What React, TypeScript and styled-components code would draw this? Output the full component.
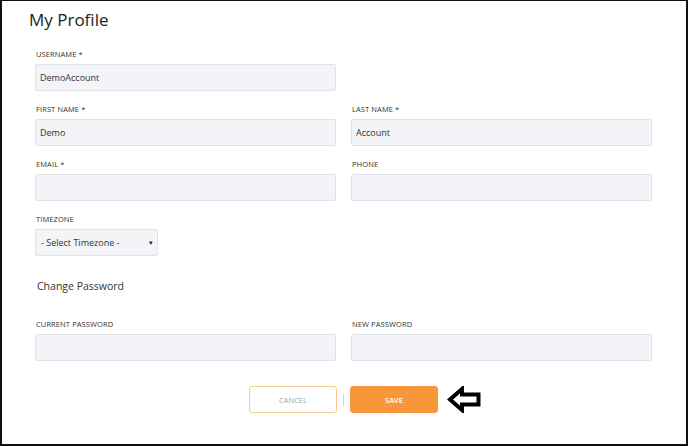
import React from 'react'
import styled, { createGlobalStyle } from 'styled-components'

const GlobalStyle = createGlobalStyle`
  html, body {
    margin: 0;
    padding: 0;
    background: #ffffff;
  }
  * {
    box-sizing: border-box;
  }
`

export default function App() {
  return (
    <Page>
      <GlobalStyle />
      <Title>My Profile</Title>
      <Form>
        <Grid>
          <Field>
            <Label>Username *</Label>
            <Input defaultValue="DemoAccount" />
          </Field>
          <div />
          <Field>
            <Label>First Name *</Label>
            <Input defaultValue="Demo" />
          </Field>
          <Field>
            <Label>Last Name *</Label>
            <Input defaultValue="Account" />
          </Field>
          <Field>
            <Label>Email *</Label>
            <Input />
          </Field>
          <Field>
            <Label>Phone</Label>
            <Input />
          </Field>
          <Field>
            <Label>Timezone</Label>
            <SelectBox>
              <span>- Select Timezone -</span>
              <Caret>▾</Caret>
            </SelectBox>
          </Field>
        </Grid>

        <SectionTitle>Change Password</SectionTitle>

        <Grid>
          <Field>
            <Label>Current Password</Label>
            <Input type="password" />
          </Field>
          <Field>
            <Label>New Password</Label>
            <Input type="password" />
          </Field>
        </Grid>

        <Actions>
          <CancelButton>CANCEL</CancelButton>
          <Divider />
          <SaveButton>SAVE</SaveButton>
          <Pointer width="34" height="27" viewBox="0 0 34 27">
            <path
              d="M3 13.5 L15 3 L15 8.5 L31.5 8.5 L31.5 18.5 L15 18.5 L15 24 Z"
              fill="#ffffff"
              stroke="#000000"
              strokeWidth="4"
              strokeLinejoin="miter"
            />
          </Pointer>
        </Actions>
      </Form>
    </Page>
  )
}

const Page = styled.div`
  width: 688px;
  height: 446px;
  border: 2px solid #111111;
  border-top-width: 1px;
  background: #ffffff;
  font-family: "Open Sans", "Liberation Sans", sans-serif;
  color: #333333;
  overflow: hidden;
`

const Title = styled.h1`
  margin: 6px 0 0 27px;
  font-family: "Open Sans", sans-serif;
  font-size: 17px;
  font-weight: 400;
  line-height: 26px;
  color: #222222;
`

const Form = styled.div`
  padding: 16px 34px 0 33px;
`

const Grid = styled.div`
  display: grid;
  grid-template-columns: 301px 301px;
  column-gap: 15px;
  row-gap: 13px;
`

const Field = styled.div`
  display: flex;
  flex-direction: column;
  align-items: flex-start;
`

const Label = styled.label`
  font-size: 7.5px;
  line-height: 10px;
  height: 10px;
  margin: 0 0 5px 1px;
  text-transform: uppercase;
  color: #333333;
  letter-spacing: 0.1px;
`

const Input = styled.input`
  width: 100%;
  height: 27px;
  background: #f2f4f7;
  border: 1px solid #dfe2e6;
  border-radius: 2px;
  padding: 0 4px;
  font-family: "Open Sans", sans-serif;
  font-size: 9px;
  color: #333333;
  outline: none;
`

const SelectBox = styled.div`
  width: 123px;
  height: 27px;
  background: #f2f4f7;
  border: 1px solid #dfe2e6;
  border-radius: 2px;
  padding: 0 4px 0 5px;
  display: flex;
  align-items: center;
  justify-content: space-between;
  font-size: 9px;
  color: #333333;
`

const Caret = styled.span`
  font-size: 7px;
  color: #222222;
`

const SectionTitle = styled.h2`
  margin: 23px 0 26px 2px;
  font-size: 10.5px;
  line-height: 14px;
  font-weight: 400;
  color: #333333;
`

const Actions = styled.div`
  position: relative;
  display: flex;
  justify-content: center;
  align-items: center;
  gap: 6px;
  margin: 25px 0 0 0;
`

const ButtonBase = styled.button`
  width: 88px;
  height: 27px;
  border-radius: 3px;
  font-family: "Open Sans", sans-serif;
  font-size: 7.5px;
  cursor: pointer;
`

const CancelButton = styled(ButtonBase)`
  background: #ffffff;
  border: 1px solid #f8c898;
  color: #a8a8a8;
`

const SaveButton = styled(ButtonBase)`
  background: #f7963a;
  border: 1px solid #f7963a;
  color: #ffffff;
  font-weight: 600;
`

const Divider = styled.span`
  width: 1px;
  height: 12px;
  background: #d8d8d8;
`

const Pointer = styled.svg`
  position: absolute;
  left: 412px;
  top: 0;
`
